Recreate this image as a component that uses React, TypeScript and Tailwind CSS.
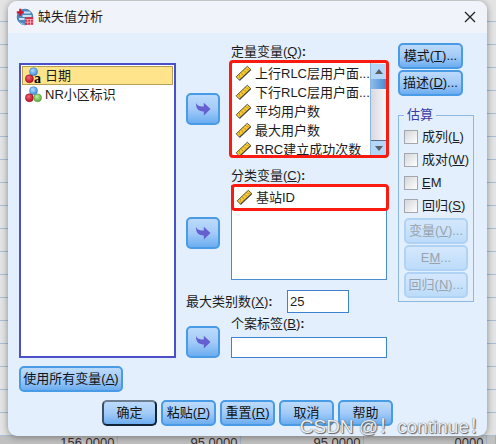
import { useState } from "react";
import type { ReactNode } from "react";
import clsx from "clsx";

type Kind = "text" | "nominal" | "scale";

type Variable = {
  name: string;
  kind: Kind;
};

const SOURCE_VARIABLES: Variable[] = [
  { name: "日期", kind: "text" },
  { name: "NR小区标识", kind: "nominal" },
];

const QUANTITATIVE: Variable[] = [
  { name: "上行RLC层用户面...", kind: "scale" },
  { name: "下行RLC层用户面...", kind: "scale" },
  { name: "平均用户数", kind: "scale" },
  { name: "最大用户数", kind: "scale" },
  { name: "RRC建立成功次数", kind: "scale" },
];

const CATEGORICAL: Variable[] = [{ name: "基站ID", kind: "scale" }];

const ESTIMATES = [
  { id: "listwise", text: "成列(", mnemonic: "L", rest: ")" },
  { id: "pairwise", text: "成对(", mnemonic: "W", rest: ")" },
  { id: "em", text: "", mnemonic: "E", rest: "M" },
  { id: "regression", text: "回归(", mnemonic: "S", rest: ")" },
];

const SHEET_ROWS = 19;
const SHEET_VALUES = ["156.0000", "95.0000", "95.0000", ".0000", ""];

function NominalIcon({ withLetter }: { withLetter?: boolean }) {
  return (
    <svg viewBox="0 0 17 17" className="h-[17px] w-[17px] shrink-0" aria-hidden="true">
      <defs>
        <radialGradient id="ballBlue" cx="0.4" cy="0.35" r="0.65">
          <stop offset="0" stopColor="#b5dcff" />
          <stop offset="1" stopColor="#3f8fe0" />
        </radialGradient>
        <radialGradient id="ballRed" cx="0.4" cy="0.35" r="0.65">
          <stop offset="0" stopColor="#f06a74" />
          <stop offset="1" stopColor="#b80e20" />
        </radialGradient>
        <radialGradient id="ballGreen" cx="0.4" cy="0.35" r="0.65">
          <stop offset="0" stopColor="#c4eda4" />
          <stop offset="1" stopColor="#5cab3c" />
        </radialGradient>
      </defs>
      <circle cx="8.5" cy="4.7" r="4" fill="url(#ballBlue)" stroke="#3c7fc8" strokeWidth="0.6" />
      <circle cx="4.4" cy="11.8" r="4" fill="url(#ballRed)" stroke="#a01020" strokeWidth="0.6" />
      {withLetter ? (
        <text x="9" y="16" fontSize="14" fontWeight="bold" fontFamily="Liberation Serif, serif" fill="#000">
          a
        </text>
      ) : (
        <circle cx="12.6" cy="11.8" r="3.9" fill="url(#ballGreen)" stroke="#4f9438" strokeWidth="0.6" />
      )}
    </svg>
  );
}

function RulerIcon() {
  return (
    <svg viewBox="0 0 17 17" className="h-[17px] w-[17px] shrink-0" aria-hidden="true">
      <path d="M1.2 11.8 12.3 1.3 15.8 4.6 4.6 15.3z" fill="#f7cb34" stroke="#5d5a45" strokeWidth="1" />
      <path d="M4.6 15.3 15.8 4.6" stroke="#4a4a44" strokeWidth="1.3" />
      <path d="M3.6 9.6l1 1M5.8 7.5l1 1M8 5.4l1 1M10.2 3.3l1 1" stroke="#6c5d20" strokeWidth="0.8" />
      <path d="M4.2 12.6l1-1M7 10l1-1M9.8 7.4l1-1M12.4 4.900l.9-.9" stroke="#e09a18" strokeWidth="1.4" />
    </svg>
  );
}

function AppIcon() {
  return (
    <svg viewBox="0 0 18 18" className="h-[18px] w-[18px] shrink-0" aria-hidden="true">
      <circle cx="9" cy="9" r="7.8" fill="#4f86bd" stroke="#356da6" strokeWidth="0.8" />
      <path d="M7 4.500h7.500M6.500 8h9M3 11h5.500" stroke="#c7e1f5" strokeWidth="1.8" />
      <path d="M3.500 14c1.500 1.600 3.200 2.200 5 2.200" stroke="#a8cdeb" strokeWidth="1" fill="none" />
      <path d="M4.300.8v7M.8 4.300h7" stroke="#d0142c" strokeWidth="2.2" />
      <rect x="9.2" y="9.2" width="8" height="7.6" fill="#d5304a" />
      <path d="M9.2 11.6h8M9.2 14.2h8M11.8 11v5.8M14.5 11v5.8" stroke="#ffc9d0" strokeWidth="0.7" />
    </svg>
  );
}

function VariableRow({ variable, selected }: { variable: Variable; selected?: boolean }) {
  return (
    <li
      role="option"
      aria-selected={!!selected}
      className={clsx(
        "flex h-[19px] items-center gap-[3px] border pl-[2px] whitespace-nowrap",
        selected ? "border-[#b59f55] bg-[#ffe48c]" : "border-transparent",
      )}
    >
      {variable.kind === "scale" ? <RulerIcon /> : <NominalIcon withLetter={variable.kind === "text"} />}
      <span>{variable.name}</span>
    </li>
  );
}

type PushButtonProps = {
  children: ReactNode;
  className?: string;
  disabled?: boolean;
  primary?: boolean;
};

function PushButton({ children, className, disabled, primary }: PushButtonProps) {
  return (
    <button
      type="button"
      disabled={disabled}
      className={clsx(
        "h-[26px] rounded-[5px] border-2 text-center leading-[20px] whitespace-nowrap",
        disabled
          ? "border-[#b0d3f5] bg-linear-to-b from-[#d5e8fc] to-[#bcdcfa] text-[#9aa3ad]"
          : "bg-linear-to-b from-[#bcdafb] via-[#a3cbf8] to-[#6badf0] text-[#101418]",
        !disabled && (primary ? "border-[#10243c] border-t-[#6f7f92] border-l-[#3f4f62]" : "border-[#4a9be6]"),
        className,
      )}
    >
      {children}
    </button>
  );
}

function MoveButton({ label }: { label: string }) {
  return (
    <button
      type="button"
      aria-label={label}
      className="flex h-8 w-[34px] shrink-0 items-center justify-center rounded-[5px] border-2 border-[#4a9be6] bg-linear-to-b from-[#bcdafb] via-[#a3cbf8] to-[#6badf0]"
    >
      <svg viewBox="0 0 16 14" className="h-[14px] w-4" aria-hidden="true">
        <path d="M1 .6C1.600 3.600 4 4.700 8.800 4.600V.8L15.500 7 8.800 13.400V9.400C3.600 9.600.8 7 1 .6z" fill="#655fd0" />
      </svg>
    </button>
  );
}

function Sheet() {
  return (
    <div className="absolute inset-0 overflow-hidden bg-[#e4e4e4]">
      <table className="w-full table-fixed border-collapse text-[13px] leading-none text-[#3a2f2f]">
        <colgroup>
          <col className="w-[117px]" />
          <col className="w-[123px]" />
          <col className="w-[123px]" />
          <col className="w-[123px]" />
          <col />
        </colgroup>
        <tbody>
          {Array.from({ length: SHEET_ROWS }).map((_, row) => (
            <tr key={row} className="h-[23px] border-b border-[#a9bfd4] first:h-[21px]">
              {SHEET_VALUES.map((_value, col) => (
                <td key={col} />
              ))}
            </tr>
          ))}
          <tr className="h-[23px] bg-[#c0c0c0]">
            {SHEET_VALUES.map((value, col) => (
              <td key={col} className="border-r border-[#9fb0c2] pr-[2px] text-right align-top">
                {value}
              </td>
            ))}
          </tr>
        </tbody>
      </table>
    </div>
  );
}

export default function App() {
  const [maxCategories, setMaxCategories] = useState("25");
  const [caseLabel, setCaseLabel] = useState("");

  return (
    <div className="relative min-h-screen overflow-hidden pt-px pr-[9px] pb-2 pl-2 font-['Liberation_Sans','Noto_Sans_CJK_SC',sans-serif] text-[13px] leading-[18px] text-[#1c1c20]">
      <Sheet />

      <div
        role="dialog"
        aria-labelledby="dialog-title"
        className="relative overflow-hidden rounded-[9px] bg-[#e3effc] shadow-[0_1px_7px_rgba(0,0,0,0.4)]"
      >
        <header className="flex h-8 items-center gap-1 bg-[#f0f4fa] pr-[11px] pl-2">
          <AppIcon />
          <h1 id="dialog-title" className="flex-1 text-[13px]">
            缺失值分析
          </h1>
          <button type="button" aria-label="关闭" className="p-0">
            <svg viewBox="0 0 12 12" className="h-3 w-3" aria-hidden="true">
              <path d="M1 1l10 10M11 1L1 11" stroke="#222" strokeWidth="1.3" />
            </svg>
          </button>
        </header>

        <div className="flex pt-[10px] pr-[13px] pl-[11px]">
          <div className="flex flex-1 flex-col pt-5">
            <ul role="listbox" aria-label="变量" className="flex-1 border-2 border-[#4a50c8] bg-white p-px">
              {SOURCE_VARIABLES.map((variable, i) => (
                <VariableRow key={variable.name} variable={variable} selected={i === 0} />
              ))}
            </ul>
          </div>

          <div className="ml-[10px] flex w-[201px] flex-col">
            <div className="flex items-center gap-[11px]">
              <div className="pt-[18px]">
                <MoveButton label="移动到定量变量" />
              </div>
              <div className="min-w-0 flex-1">
                <div id="quant-label" className="h-[18px]">
                  定量变量(<u>Q</u>)<b>:</b>
                </div>
                <div className="relative flex h-[96px] bg-white">
                  <ul role="listbox" aria-labelledby="quant-label" className="flex-1 overflow-hidden pt-[3px] pl-px">
                    {QUANTITATIVE.map((variable) => (
                      <VariableRow key={variable.name} variable={variable} />
                    ))}
                  </ul>
                  <div className="flex w-[17px] flex-col border-x border-[#8fb4dc] bg-linear-to-r from-[#d8d8e0] to-[#f6f6fa] pt-[3px] pb-[2px]">
                    <span className="flex h-[15px] items-center justify-center bg-[#b4d6f8]">
                      <svg viewBox="0 0 8 5" className="h-[5px] w-2" aria-hidden="true">
                        <path d="M0 5 4 0l4 5z" fill="#5a6068" />
                      </svg>
                    </span>
                    <span className="h-[10px] bg-linear-to-r from-[#8cbcec] to-[#4a8cd0]" />
                    <span className="flex-1" />
                    <span className="flex h-[15px] items-center justify-center border-t border-[#5a6a80] bg-[#b4d6f8]">
                      <svg viewBox="0 0 8 5" className="h-[5px] w-2" aria-hidden="true">
                        <path d="M0 0h8L4 5z" fill="#5a6068" />
                      </svg>
                    </span>
                  </div>
                  {/* red marker around the list */}
                  <span className="pointer-events-none absolute -inset-x-[2px] -inset-y-px rounded-[4px] border-[3px] border-[#fa1a10]" />
                </div>
              </div>
            </div>

            <div className="mt-[10px] flex items-center gap-[11px]">
              <div className="pt-[18px]">
                <MoveButton label="移动到分类变量" />
              </div>
              <div className="min-w-0 flex-1">
                <div id="cat-label" className="h-[18px]">
                  分类变量(<u>C</u>)<b>:</b>
                </div>
                <div className="relative">
                  <ul
                    role="listbox"
                    aria-labelledby="cat-label"
                    className="h-[95px] border border-[#4a8cd0] bg-white pt-[2px] pl-px"
                  >
                    {CATEGORICAL.map((variable) => (
                      <VariableRow key={variable.name} variable={variable} />
                    ))}
                  </ul>
                  <span className="pointer-events-none absolute -top-px -right-[2px] left-0 h-[27px] rounded-[4px] border-[3px] border-[#fa1a10]" />
                </div>
              </div>
            </div>

            <div className="mt-[10px] flex items-center">
              <label htmlFor="max-categories" className="w-[101px]">
                最大类别数(<u>X</u>)<b>:</b>
              </label>
              <input
                id="max-categories"
                value={maxCategories}
                onChange={(e) => setMaxCategories(e.target.value)}
                className="h-[23px] w-[62px] border border-[#3d82d0] bg-white px-[2px] outline-none"
              />
            </div>

            <div className="mt-[2px] flex items-end gap-[11px]">
              <MoveButton label="移动到个案标签" />
              <div className="min-w-0 flex-1">
                <label htmlFor="case-label" className="block h-[22px]">
                  个案标签(<u>B</u>)<b>:</b>
                </label>
                <input
                  id="case-label"
                  value={caseLabel}
                  onChange={(e) => setCaseLabel(e.target.value)}
                  className="block h-[21px] w-full border border-[#3d82d0] bg-white px-[2px] outline-none"
                />
              </div>
            </div>
          </div>

          <div className="ml-[11px] flex w-[76px] flex-col gap-px">
            <PushButton className="w-[65px]">
              模式(<u>T</u>)...
            </PushButton>
            <PushButton className="w-[65px]">
              描述(<u>D</u>)...
            </PushButton>
            <fieldset className="mt-[9px] min-w-0 border border-[#8cb8e4] px-[5px] pb-[3px]">
              <legend className="px-[3px] text-[#3c3ca8]">估算</legend>
              <div className="flex flex-col gap-[5px] pt-1">
                {ESTIMATES.map((item) => (
                  <div key={item.id} className="flex items-center gap-1 whitespace-nowrap">
                    <input
                      id={item.id}
                      type="checkbox"
                      className="h-[14px] w-[14px] shrink-0 appearance-none border border-[#a3a8ae] bg-linear-to-br from-[#d3d6da] to-white checked:bg-[#4a8cd0]"
                    />
                    <label htmlFor={item.id}>
                      {item.text}
                      <u>{item.mnemonic}</u>
                      {item.rest}
                    </label>
                  </div>
                ))}
              </div>
              <div className="mt-[3px] flex flex-col gap-px">
                <PushButton disabled>
                  变量(<u>V</u>)...
                </PushButton>
                <PushButton disabled>
                  E<u>M</u>...
                </PushButton>
                <PushButton disabled>
                  回归(<u>N</u>)...
                </PushButton>
              </div>
            </fieldset>
          </div>
        </div>

        <div className="mt-2 pl-[11px]">
          <PushButton className="w-[104px]">
            使用所有变量(<u>A</u>)
          </PushButton>
        </div>

        <footer className="flex justify-center gap-1 pt-2 pb-[10px]">
          <PushButton primary className="w-[55px]">
            确定
          </PushButton>
          <PushButton className="w-[55px]">
            粘贴(<u>P</u>)
          </PushButton>
          <PushButton className="w-[55px]">
            重置(<u>R</u>)
          </PushButton>
          <PushButton className="w-[55px]">取消</PushButton>
          <PushButton className="w-[55px]">帮助</PushButton>
        </footer>
      </div>

      <p className="pointer-events-none absolute right-2 bottom-[5px] text-[19px] leading-[24px] whitespace-nowrap text-[#e9edf2] [text-shadow:0_0_1px_#555,1px_1px_1px_#666]">
        CSDN @！continue！
      </p>
    </div>
  );
}
